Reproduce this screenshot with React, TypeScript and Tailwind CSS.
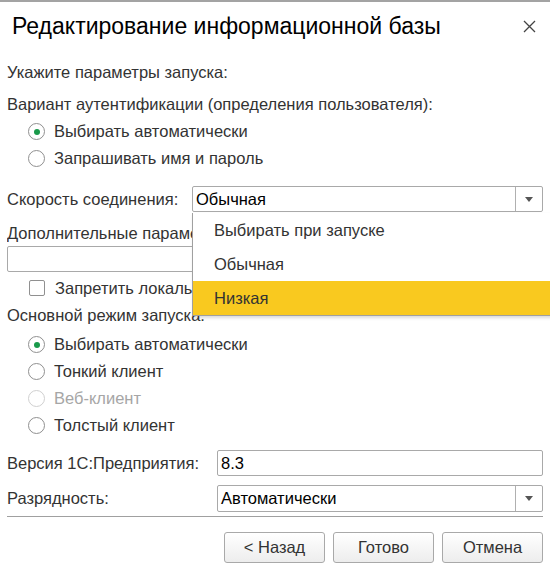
import React from "react";

function Radio({ label, checked, disabled }: { label: string; checked?: boolean; disabled?: boolean }) {
  return (
    <div className="flex h-[27px] items-center pl-[21px]">
      <span
        className={`flex h-[17px] w-[17px] items-center justify-center rounded-full border bg-white ${
          disabled ? "border-[#d0d0d0]" : "border-[#909090]"
        }`}
      >
        {checked && <span className="h-[6px] w-[6px] rounded-full bg-[#1a9a4b]" />}
      </span>
      <span className={`ml-[9px] ${disabled ? "text-[#a6a6a6]" : "text-[#333]"}`}>{label}</span>
    </div>
  );
}

function Arrow() {
  return (
    <div className="flex w-[27px] items-center justify-center border-l border-[#b0b0b0]">
      <svg width="8" height="5" viewBox="0 0 8 5">
        <path d="M0 0h8L4 5z" fill="#555" />
      </svg>
    </div>
  );
}

function Btn({ children }: { children: React.ReactNode }) {
  return (
    <button className="h-[31px] w-[101px] rounded-[3px] border border-[#a9a9a9] bg-gradient-to-b from-white to-[#ededed] text-[16.5px] text-[#333]">
      {children}
    </button>
  );
}

export default function App() {
  return (
    <div
      className="relative h-[573px] w-[550px] overflow-hidden border-t-2 border-[#a3a3a3] bg-white text-[16.5px] text-[#333]"
      style={{ fontFamily: '"Liberation Sans", Arial, sans-serif' }}
    >
      {/* Header */}
      <div className="flex h-[48px] items-center justify-between pl-[12px] pr-[14px]">
        <h1 className="whitespace-nowrap text-[23px] text-black">Редактирование информационной базы</h1>
        <svg width="13" height="13" viewBox="0 0 13 13" className="mt-[1px] shrink-0">
          <path d="M1 1l11 11M12 1L1 12" stroke="#444" strokeWidth="1.3" />
        </svg>
      </div>

      <div className="px-[7px]">
        <div className="mt-[8px] flex h-[28px] items-center">Укажите параметры запуска:</div>
        <div className="mt-[4px] flex h-[28px] items-center whitespace-nowrap">
          Вариант аутентификации (определения пользователя):
        </div>
        <Radio label="Выбирать автоматически" checked />
        <Radio label="Запрашивать имя и пароль" />

        {/* Speed */}
        <div className="mt-[14px] flex h-[26px] items-center">
          <span className="w-[185px] whitespace-nowrap">Скорость соединения:</span>
          <div className="flex h-full flex-1 rounded-[2px] border border-[#a9a9a9]">
            <span className="flex flex-1 items-center pl-[3px] text-black">Обычная</span>
            <Arrow />
          </div>
        </div>

        <div className="mt-[10px] flex h-[22px] w-[185px] items-center overflow-hidden whitespace-nowrap">
          Дополнительные параметры запуска:
        </div>
        <div className="mt-[2px] h-[26px] rounded-[2px] border border-[#a9a9a9]" />
        <div className="mt-[2px] flex h-[28px] w-[185px] items-center overflow-hidden whitespace-nowrap pl-[22px]">
          <span className="h-[16px] w-[16px] shrink-0 rounded-[2px] border border-[#909090]" />
          <span className="ml-[10px]">Запретить локальное кэширование</span>
        </div>
        <div className="flex h-[26px] items-center">Основной режим запуска:</div>
        <div className="mt-[3px]">
          <Radio label="Выбирать автоматически" checked />
          <Radio label="Тонкий клиент" />
          <Radio label="Веб-клиент" disabled />
          <Radio label="Толстый клиент" />
        </div>

        <div className="mt-[11px] flex h-[26px] items-center">
          <span className="w-[210px] whitespace-nowrap">Версия 1С:Предприятия:</span>
          <div className="flex h-full flex-1 items-center rounded-[2px] border border-[#a9a9a9] pl-[3px] text-black">8.3</div>
        </div>
        <div className="mt-[9px] flex h-[27px] items-center">
          <span className="w-[210px]">Разрядность:</span>
          <div className="flex h-full flex-1 rounded-[2px] border border-[#a9a9a9]">
            <span className="flex flex-1 items-center pl-[3px] text-black">Автоматически</span>
            <Arrow />
          </div>
        </div>
        <div className="mt-[4px] h-px bg-[#a0a0a0]" />
        <div className="mt-[15px] flex justify-end gap-[8px]">
          <Btn>&lt; Назад</Btn>
          <Btn>Готово</Btn>
          <Btn>Отмена</Btn>
        </div>
      </div>

      {/* Dropdown list */}
      <div className="absolute left-[192px] top-[211px] w-[360px] border-b border-l border-[#a0a0a0] bg-white text-[#333] shadow-[1px_2px_3px_rgba(0,0,0,0.15)]">
        <div className="flex h-[34px] items-center pl-[21px]">Выбирать при запуске</div>
        <div className="flex h-[34px] items-center pl-[21px]">Обычная</div>
        <div className="flex h-[34px] items-center bg-[#f9c91f] pl-[21px]">Низкая</div>
      </div>
    </div>
  );
}
